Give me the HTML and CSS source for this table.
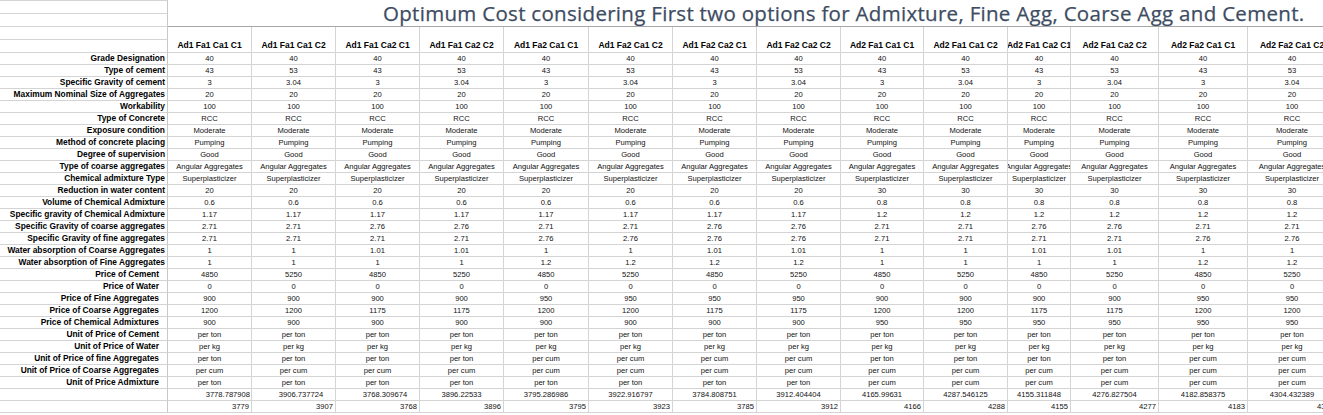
FILE: index.html
```html
<!DOCTYPE html>
<html lang="en">
<head>
<meta charset="utf-8">
<title>Optimum Cost</title>
<link rel="stylesheet" href="styles.css">
</head>
<body>
<div class="sheet">
  <div class="title">Optimum Cost considering First two options for Admixture, Fine Agg, Coarse Agg and Cement.</div>
  <div class="e"></div>
  <div class="e"></div>
  <div class="e"></div>
  <div class="e"></div>
  <div class="h">Ad1 Fa1 Ca1 C1</div><div class="h">Ad1 Fa1 Ca1 C2</div><div class="h">Ad1 Fa1 Ca2 C1</div><div class="h">Ad1 Fa1 Ca2 C2</div><div class="h">Ad1 Fa2 Ca1 C1</div><div class="h">Ad1 Fa2 Ca1 C2</div><div class="h">Ad1 Fa2 Ca2 C1</div><div class="h">Ad1 Fa2 Ca2 C2</div><div class="h">Ad2 Fa1 Ca1 C1</div><div class="h">Ad2 Fa1 Ca1 C2</div><div class="h">Ad2 Fa1 Ca2 C1</div><div class="h">Ad2 Fa1 Ca2 C2</div><div class="h">Ad2 Fa2 Ca1 C1</div><div class="h">Ad2 Fa2 Ca1 C2</div>
  <div class="e"></div>

  <div class="l">Grade Designation</div>
  <div>40</div><div>40</div><div>40</div><div>40</div><div>40</div><div>40</div><div>40</div><div>40</div><div>40</div><div>40</div><div>40</div><div>40</div><div>40</div><div>40</div>

  <div class="l">Type of cement</div>
  <div>43</div><div>53</div><div>43</div><div>53</div><div>43</div><div>53</div><div>43</div><div>53</div><div>43</div><div>53</div><div>43</div><div>53</div><div>43</div><div>53</div>

  <div class="l">Specific Gravity of cement</div>
  <div>3</div><div>3.04</div><div>3</div><div>3.04</div><div>3</div><div>3.04</div><div>3</div><div>3.04</div><div>3</div><div>3.04</div><div>3</div><div>3.04</div><div>3</div><div>3.04</div>

  <div class="l">Maximum Nominal Size of Aggregates</div>
  <div>20</div><div>20</div><div>20</div><div>20</div><div>20</div><div>20</div><div>20</div><div>20</div><div>20</div><div>20</div><div>20</div><div>20</div><div>20</div><div>20</div>

  <div class="l">Workability</div>
  <div>100</div><div>100</div><div>100</div><div>100</div><div>100</div><div>100</div><div>100</div><div>100</div><div>100</div><div>100</div><div>100</div><div>100</div><div>100</div><div>100</div>

  <div class="l">Type of Concrete</div>
  <div>RCC</div><div>RCC</div><div>RCC</div><div>RCC</div><div>RCC</div><div>RCC</div><div>RCC</div><div>RCC</div><div>RCC</div><div>RCC</div><div>RCC</div><div>RCC</div><div>RCC</div><div>RCC</div>

  <div class="l">Exposure condition</div>
  <div>Moderate</div><div>Moderate</div><div>Moderate</div><div>Moderate</div><div>Moderate</div><div>Moderate</div><div>Moderate</div><div>Moderate</div><div>Moderate</div><div>Moderate</div><div>Moderate</div><div>Moderate</div><div>Moderate</div><div>Moderate</div>

  <div class="l">Method of concrete placing</div>
  <div>Pumping</div><div>Pumping</div><div>Pumping</div><div>Pumping</div><div>Pumping</div><div>Pumping</div><div>Pumping</div><div>Pumping</div><div>Pumping</div><div>Pumping</div><div>Pumping</div><div>Pumping</div><div>Pumping</div><div>Pumping</div>

  <div class="l">Degree of supervision</div>
  <div>Good</div><div>Good</div><div>Good</div><div>Good</div><div>Good</div><div>Good</div><div>Good</div><div>Good</div><div>Good</div><div>Good</div><div>Good</div><div>Good</div><div>Good</div><div>Good</div>

  <div class="l">Type of coarse aggregates</div>
  <div>Angular Aggregates</div><div>Angular Aggregates</div><div>Angular Aggregates</div><div>Angular Aggregates</div><div>Angular Aggregates</div><div>Angular Aggregates</div><div>Angular Aggregates</div><div>Angular Aggregates</div><div>Angular Aggregates</div><div>Angular Aggregates</div><div>Angular Aggregates</div><div>Angular Aggregates</div><div>Angular Aggregates</div><div>Angular Aggregates</div>

  <div class="l">Chemical admixture Type</div>
  <div>Superplasticizer</div><div>Superplasticizer</div><div>Superplasticizer</div><div>Superplasticizer</div><div>Superplasticizer</div><div>Superplasticizer</div><div>Superplasticizer</div><div>Superplasticizer</div><div>Superplasticizer</div><div>Superplasticizer</div><div>Superplasticizer</div><div>Superplasticizer</div><div>Superplasticizer</div><div>Superplasticizer</div>

  <div class="l">Reduction in water content</div>
  <div>20</div><div>20</div><div>20</div><div>20</div><div>20</div><div>20</div><div>20</div><div>20</div><div>30</div><div>30</div><div>30</div><div>30</div><div>30</div><div>30</div>

  <div class="l">Volume of Chemical Admixture</div>
  <div>0.6</div><div>0.6</div><div>0.6</div><div>0.6</div><div>0.6</div><div>0.6</div><div>0.6</div><div>0.6</div><div>0.8</div><div>0.8</div><div>0.8</div><div>0.8</div><div>0.8</div><div>0.8</div>

  <div class="l">Specific gravity of Chemical Admixture</div>
  <div>1.17</div><div>1.17</div><div>1.17</div><div>1.17</div><div>1.17</div><div>1.17</div><div>1.17</div><div>1.17</div><div>1.2</div><div>1.2</div><div>1.2</div><div>1.2</div><div>1.2</div><div>1.2</div>

  <div class="l">Specific Gravity of coarse aggregates</div>
  <div>2.71</div><div>2.71</div><div>2.76</div><div>2.76</div><div>2.71</div><div>2.71</div><div>2.76</div><div>2.76</div><div>2.71</div><div>2.71</div><div>2.76</div><div>2.76</div><div>2.71</div><div>2.71</div>

  <div class="l">Specific Gravity of fine aggregates</div>
  <div>2.71</div><div>2.71</div><div>2.71</div><div>2.71</div><div>2.76</div><div>2.76</div><div>2.76</div><div>2.76</div><div>2.71</div><div>2.71</div><div>2.71</div><div>2.71</div><div>2.76</div><div>2.76</div>

  <div class="l">Water absorption of Coarse Aggregates</div>
  <div>1</div><div>1</div><div>1.01</div><div>1.01</div><div>1</div><div>1</div><div>1.01</div><div>1.01</div><div>1</div><div>1</div><div>1.01</div><div>1.01</div><div>1</div><div>1</div>

  <div class="l">Water absorption of Fine Aggregates</div>
  <div>1</div><div>1</div><div>1</div><div>1</div><div>1.2</div><div>1.2</div><div>1.2</div><div>1.2</div><div>1</div><div>1</div><div>1</div><div>1</div><div>1.2</div><div>1.2</div>

  <div class="l p">Price of Cement</div>
  <div>4850</div><div>5250</div><div>4850</div><div>5250</div><div>4850</div><div>5250</div><div>4850</div><div>5250</div><div>4850</div><div>5250</div><div>4850</div><div>5250</div><div>4850</div><div>5250</div>

  <div class="l p">Price of Water</div>
  <div>0</div><div>0</div><div>0</div><div>0</div><div>0</div><div>0</div><div>0</div><div>0</div><div>0</div><div>0</div><div>0</div><div>0</div><div>0</div><div>0</div>

  <div class="l p">Price of Fine Aggregates</div>
  <div>900</div><div>900</div><div>900</div><div>900</div><div>950</div><div>950</div><div>950</div><div>950</div><div>900</div><div>900</div><div>900</div><div>900</div><div>950</div><div>950</div>

  <div class="l p">Price of Coarse Aggregates</div>
  <div>1200</div><div>1200</div><div>1175</div><div>1175</div><div>1200</div><div>1200</div><div>1175</div><div>1175</div><div>1200</div><div>1200</div><div>1175</div><div>1175</div><div>1200</div><div>1200</div>

  <div class="l p">Price of Chemical Admixtures</div>
  <div>900</div><div>900</div><div>900</div><div>900</div><div>900</div><div>900</div><div>900</div><div>900</div><div>950</div><div>950</div><div>950</div><div>950</div><div>950</div><div>950</div>

  <div class="l p">Unit of Price of Cement</div>
  <div>per ton</div><div>per ton</div><div>per ton</div><div>per ton</div><div>per ton</div><div>per ton</div><div>per ton</div><div>per ton</div><div>per ton</div><div>per ton</div><div>per ton</div><div>per ton</div><div>per ton</div><div>per ton</div>

  <div class="l p">Unit of Price of Water</div>
  <div>per kg</div><div>per kg</div><div>per kg</div><div>per kg</div><div>per kg</div><div>per kg</div><div>per kg</div><div>per kg</div><div>per kg</div><div>per kg</div><div>per kg</div><div>per kg</div><div>per kg</div><div>per kg</div>

  <div class="l p">Unit of Price of fine Aggregates</div>
  <div>per ton</div><div>per ton</div><div>per ton</div><div>per ton</div><div>per cum</div><div>per cum</div><div>per cum</div><div>per cum</div><div>per ton</div><div>per ton</div><div>per ton</div><div>per ton</div><div>per cum</div><div>per cum</div>

  <div class="l p">Unit of Price of Coarse Aggregates</div>
  <div>per cum</div><div>per cum</div><div>per cum</div><div>per cum</div><div>per cum</div><div>per cum</div><div>per cum</div><div>per cum</div><div>per cum</div><div>per cum</div><div>per cum</div><div>per cum</div><div>per cum</div><div>per cum</div>

  <div class="l p">Unit of Price Admixture</div>
  <div>per ton</div><div>per ton</div><div>per ton</div><div>per ton</div><div>per ton</div><div>per ton</div><div>per ton</div><div>per ton</div><div>per cum</div><div>per cum</div><div>per cum</div><div>per cum</div><div>per cum</div><div>per cum</div>

  <div class="l"></div>
  <div class="t1">3778.787908</div><div class="t2">3906.737724</div><div class="t2">3768.309674</div><div>3896.22533</div><div>3795.286986</div><div>3922.916797</div><div>3784.808751</div><div>3912.404404</div><div>4165.99631</div><div>4287.546125</div><div>4155.311848</div><div>4276.827504</div><div>4182.858375</div><div>4304.432389</div>

  <div class="l"></div>
  <div class="r">3779</div><div class="r">3907</div><div class="r">3768</div><div class="r">3896</div><div class="r">3795</div><div class="r">3923</div><div class="r">3785</div><div class="r">3912</div><div class="r">4166</div><div class="r">4288</div><div class="r">4155</div><div class="r">4277</div><div class="r">4183</div><div class="r">4304</div>
</div>
</body>
</html>
```
FILE: styles.css
```css
html, body {
  margin: 0;
  padding: 0;
  background: #ffffff;
}

body {
  overflow: hidden;
  font-family: "Liberation Sans", Arial, sans-serif;
  color: #111111;
}

.sheet {
  display: grid;
  grid-template-columns: 168px 84px 84px 84px 84px 85px 84px 84px 84px 83px 84px 63px 88px 89px 89px;
  grid-template-rows: 1px 13px 13px 13px 13px;
  grid-auto-rows: 12px;
  width: 1337px;
}

.sheet > div {
  box-sizing: border-box;
  border-right: 1px solid #d4d4d4;
  border-bottom: 1px solid #d4d4d4;
  overflow: hidden;
  display: flex;
  align-items: center;
  justify-content: center;
  white-space: nowrap;
  font-size: 7.6px;
  line-height: 11px;
}

.sheet > .title {
  grid-column: 2 / -1;
  grid-row: 1 / 4;
  border-right: none;
  border-bottom: 1px solid #a6a6a6;
  justify-content: flex-start;
  align-items: flex-start;
  padding-left: 215px;
  font-family: "Open Sans", "Noto Sans", sans-serif;
  font-size: 20.5px;
  letter-spacing: 0.3px;
  line-height: 26px;
  color: #3d4c62;
  -webkit-text-stroke: 0.25px #3d4c62;
}

.sheet > .e {
  border-right-color: #c8c8c8;
}

.sheet > .h {
  grid-row: span 2;
  align-items: flex-end;
  padding-bottom: 1px;
  font-weight: bold;
  font-size: 8.5px;
  color: #000000;
}

.sheet > .l {
  justify-content: flex-end;
  padding-right: 2px;
  font-weight: bold;
  font-size: 8.4px;
  color: #000000;
  border-right-color: #c8c8c8;
}

.sheet > .l.p {
  padding-right: 8px;
}

.sheet > .t1 {
  justify-content: flex-end;
  padding-right: 1px;
}

.sheet > .t2 {
  padding-left: 15px;
}

.sheet > .r {
  justify-content: flex-end;
  padding-right: 2px;
}
```
